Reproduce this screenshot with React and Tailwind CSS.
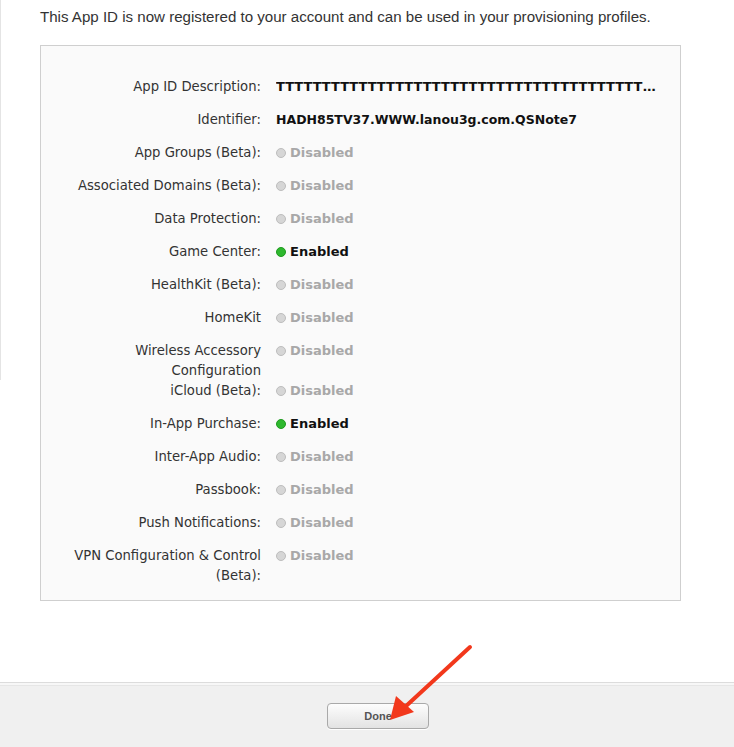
export default function App() {
  const rows = [
    { label: 'App Groups (Beta):', on: false },
    { label: 'Associated Domains (Beta):', on: false },
    { label: 'Data Protection:', on: false },
    { label: 'Game Center:', on: true },
    { label: 'HealthKit (Beta):', on: false },
    { label: 'HomeKit', on: false },
    { label: ['Wireless Accessory', 'Configuration'], on: false, h: 'h-[40px]' },
    { label: 'iCloud (Beta):', on: false },
    { label: 'In-App Purchase:', on: true },
    { label: 'Inter-App Audio:', on: false },
    { label: 'Passbook:', on: false },
    { label: 'Push Notifications:', on: false },
    { label: ['VPN Configuration & Control', '(Beta):'], on: false, h: 'h-[40px]' },
  ];

  const Status = ({ on }) => (
    <div className="flex items-center">
      {on ? (
        <span className="inline-block w-[10px] h-[10px] rounded-full bg-[#2eb82e] border border-[#1f9a1f] mr-[4px]" />
      ) : (
        <span className="inline-block w-[10px] h-[10px] rounded-full bg-[#d6d6d6] border border-[#bdbdbd] mr-[4px]" />
      )}
      <span className={on ? 'font-bold text-[#111]' : 'font-bold text-[#a8a8a8]'}>
        {on ? 'Enabled' : 'Disabled'}
      </span>
    </div>
  );

  return (
    <div className="relative w-[734px] h-[747px] bg-white overflow-hidden font-['Liberation_Sans',sans-serif]">
      {/* left edge of page frame */}
      <div className="absolute left-0 top-0 w-px h-[380px] bg-[#e4e4e4]" />

      <div className="px-[40px] pt-[8px]">
        <p className="text-[15.1px] leading-[18px] text-[#333] whitespace-nowrap">
          This App ID is now registered to your account and can be used in your provisioning profiles.
        </p>

        {/* Summary box */}
        <div className="mt-[19px] w-[641px] border border-[#cfcfcf] bg-[#fafafa] pt-[31px] pb-[14px] font-['DejaVu_Sans',sans-serif] text-[13.2px] leading-[20px] text-[#333]">
          <div className="flex h-[33px]">
            <div className="w-[220px] text-right">App ID Description:</div>
            <div className="ml-[15px] w-[381px] truncate text-[13px] font-bold text-[#111]">
              TTTTTTTTTTTTTTTTTTTTTTTTTTTTTTTTTTTTTTTTTTTTTTTTTTT
            </div>
          </div>
          <div className="flex h-[33px]">
            <div className="w-[220px] text-right">Identifier:</div>
            <div className="ml-[15px] text-[12.5px] font-bold text-[#111]">HADH85TV37.WWW.lanou3g.com.QSNote7</div>
          </div>
          {rows.map((r, i) => (
            <div key={i} className={`flex ${r.h || 'h-[33px]'}`}>
              <div className="w-[220px] text-right">
                {Array.isArray(r.label) ? r.label.map((l) => <div key={l}>{l}</div>) : r.label}
              </div>
              <div className="ml-[15px] text-[13px]">
                <Status on={r.on} />
              </div>
            </div>
          ))}
        </div>
      </div>

      {/* Footer bar */}
      <div className="absolute left-0 right-0 top-[682px] bottom-0 border-t border-[#dcdcdc] bg-[#f0f0f0]">
        <div className="h-[3px] border-b border-[#e6e6e6] bg-[#f7f7f7]" />
        <div className="pl-[327px] pt-[17px]">
          <button className="w-[102px] h-[26px] rounded-[4px] border border-[#a9a9a9] bg-gradient-to-b from-[#fdfdfd] to-[#e3e3e3] text-[11px] font-bold text-[#555] shadow-[0_1px_0_#fff]">
            Done
          </button>
        </div>
      </div>

      {/* Red annotation arrow */}
      <svg className="absolute left-0 top-0 pointer-events-none" width="734" height="747">
        <line x1="470" y1="647" x2="405" y2="707" stroke="#f2381c" strokeWidth="4" strokeLinecap="round" />
        <polygon points="390,720 396,696 414,712" fill="#f2381c" />
      </svg>
    </div>
  );
}
